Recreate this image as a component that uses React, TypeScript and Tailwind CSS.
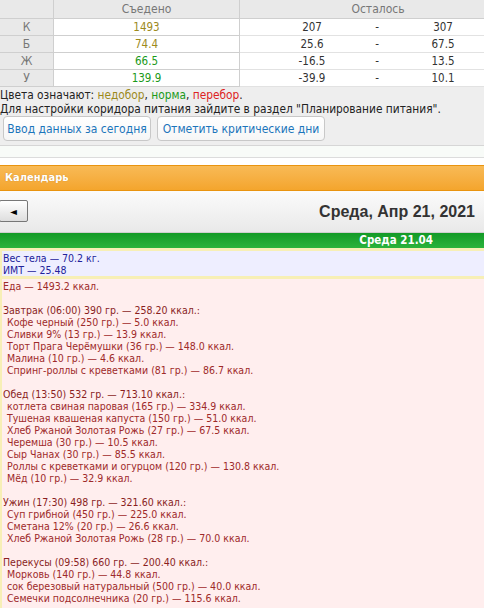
import React from 'react';

const tahoma = "font-['DejaVu_Sans_Condensed','DejaVu_Sans',sans-serif] [font-stretch:condensed]";

type Row = { label: string; eaten: string; color: string; min: string; max: string };

const rows: Row[] = [
  { label: 'К', eaten: '1493', color: 'text-[#9c8a1c]', min: '207', max: '307' },
  { label: 'Б', eaten: '74.4', color: 'text-[#9c8a1c]', min: '25.6', max: '67.5' },
  { label: 'Ж', eaten: '66.5', color: 'text-[#1a9a1a]', min: '-16.5', max: '13.5' },
  { label: 'У', eaten: '139.9', color: 'text-[#1a9a1a]', min: '-39.9', max: '10.1' },
];

type Meal = { title: string; items: string[] };

const meals: Meal[] = [
  {
    title: 'Завтрак (06:00) 390 гр. — 258.20 ккал.:',
    items: [
      'Кофе черный (250 гр.) — 5.0 ккал.',
      'Сливки 9% (13 гр.) — 13.9 ккал.',
      'Торт Прага Черёмушки (36 гр.) — 148.0 ккал.',
      'Малина (10 гр.) — 4.6 ккал.',
      'Спринг-роллы с креветками (81 гр.) — 86.7 ккал.',
    ],
  },
  {
    title: 'Обед (13:50) 532 гр. — 713.10 ккал.:',
    items: [
      'котлета свиная паровая (165 гр.) — 334.9 ккал.',
      'Тушеная квашеная капуста (150 гр.) — 51.0 ккал.',
      'Хлеб Ржаной Золотая Рожь (27 гр.) — 67.5 ккал.',
      'Черемша (30 гр.) — 10.5 ккал.',
      'Сыр Чанах (30 гр.) — 85.5 ккал.',
      'Роллы с креветками и огурцом (120 гр.) — 130.8 ккал.',
      'Мёд (10 гр.) — 32.9 ккал.',
    ],
  },
  {
    title: 'Ужин (17:30) 498 гр. — 321.60 ккал.:',
    items: [
      'Суп грибной (450 гр.) — 225.0 ккал.',
      'Сметана 12% (20 гр.) — 26.6 ккал.',
      'Хлеб Ржаной Золотая Рожь (28 гр.) — 70.0 ккал.',
    ],
  },
  {
    title: 'Перекусы (09:58) 660 гр. — 200.40 ккал.:',
    items: [
      'Морковь (140 гр.) — 44.8 ккал.',
      'сок березовый натуральный (500 гр.) — 40.0 ккал.',
      'Семечки подсолнечника (20 гр.) — 115.6 ккал.',
    ],
  },
];

function Summary() {
  return (
    <div className="bg-[#eeeeee] border-b border-[#d6d6d6]">
      <div className="grid grid-cols-[54px_186px_130px_14px_100px] text-[11.5px] leading-[16px]">
        <div className="h-[19px] bg-[#e9e9e9] border-r border-b border-[#cfcfcf]" />
        <div className="h-[19px] bg-[#e9e9e9] border-r border-b border-[#cfcfcf] text-center text-[12px] leading-[18px] text-[#777]">
          Съедено
        </div>
        <div className="col-span-3 h-[19px] bg-[#e9e9e9] border-b border-[#cfcfcf] pl-[32px] text-center text-[12px] leading-[18px] text-[#777]">
          Осталось
        </div>
        {rows.map((r) => (
          <React.Fragment key={r.label}>
            <div className="h-[17px] bg-[#e9e9e9] border-r border-b border-[#cfcfcf] text-center text-[12px] text-[#777]">
              {r.label}
            </div>
            <div className={`h-[17px] bg-white border-r border-b border-[#cfcfcf] text-center ${r.color}`}>
              {r.eaten}
            </div>
            <div className="h-[17px] bg-white border-b border-[#e2e2e2] pl-[14px] text-center text-[#333]">{r.min}</div>
            <div className="h-[17px] bg-white border-b border-[#e2e2e2] text-center text-[#333]">-</div>
            <div className="h-[17px] bg-white border-b border-[#e2e2e2] pl-[18px] text-center text-[#333]">{r.max}</div>
          </React.Fragment>
        ))}
      </div>
      <div className="mt-[1px] text-[11.8px] leading-[14px] text-[#222]">
        <div>
          Цвета означают: <span className="text-[#9c8a1c]">недобор</span>,{' '}
          <span className="text-[#1a9a1a]">норма</span>, <span className="text-[#dd2222]">перебор</span>.
        </div>
        <div>Для настройки коридора питания зайдите в раздел "Планирование питания".</div>
      </div>
      <div className="flex gap-[6px] pl-[3px] pb-[4px]">
        <button className="w-[148px] h-[25px] rounded-[4px] border border-[#c8c8c8] bg-gradient-to-b from-white to-[#f6f6f6] text-[12px] text-[#1b75bb]">
          Ввод данных за сегодня
        </button>
        <button className="w-[168px] h-[25px] rounded-[4px] border border-[#c8c8c8] bg-gradient-to-b from-white to-[#f6f6f6] text-[12px] text-[#1b75bb]">
          Отметить критические дни
        </button>
      </div>
    </div>
  );
}

function CalendarHead() {
  return (
    <>
      <div className="h-[12px] bg-[#f8fbf8] border-b border-[#dcdcdc]" />
      <div className="h-[7px] bg-white" />
      <div className="h-[26px] bg-gradient-to-b from-[#f8ba55] to-[#f4a52c] border-t border-b border-[#e9940f] flex items-center pl-[5px] text-[11px] font-bold text-white [text-shadow:0_0_1px_rgba(160,90,0,0.6)]">
        Календарь
      </div>
      <div className="h-[42px] bg-gradient-to-b from-[#fbfbfb] to-[#e9e9e9] border-b border-[#cfcfcf] flex items-center justify-between pr-[9px]">
        <button className="-ml-[1px] mt-[-1px] w-[29px] h-[22px] border border-[#777] rounded-[2px] bg-gradient-to-b from-white to-[#dedede] flex items-center justify-center text-[10px] text-black">
          ◄
        </button>
        <div className="font-['Liberation_Sans',Arial,sans-serif] text-[16px] font-bold text-[#333]">
          Среда, Апр 21, 2021
        </div>
      </div>
      <div className="h-[15px] bg-gradient-to-b from-[#129a26] to-[#2ab33c] flex items-center justify-end pr-[51px] text-[11.5px] font-bold leading-none text-white">
        Среда 21.04
      </div>
    </>
  );
}

function DayLog() {
  return (
    <div className="bg-[#f7efb6] pl-[2px] pt-[3px]">
      <div className="bg-[#eeeeff] pl-[1px] pt-[1px] h-[25px] text-[#22229a] text-[10.5px] leading-[12px]">
        <div>Вес тела — 70.2 кг.</div>
        <div>ИМТ — 25.48</div>
      </div>
      <div className="mt-[3px] bg-[#ffeeee] pl-[1px] pt-[1px] pb-[20px] text-[#9e2a2a] text-[10.5px] leading-[12px]">
        <div>Еда — 1493.2 ккал.</div>
        {meals.map((m) => (
          <div key={m.title} className="mt-[12px]">
            <div className="text-[#8a1e1e]">{m.title}</div>
            {m.items.map((it) => (
              <div key={it} className="pl-[4px]">
                {it}
              </div>
            ))}
          </div>
        ))}
      </div>
    </div>
  );
}

export default function App() {
  return (
    <div className={`w-[484px] h-[608px] overflow-hidden bg-white ${tahoma}`}>
      <Summary />
      <CalendarHead />
      <DayLog />
    </div>
  );
}
